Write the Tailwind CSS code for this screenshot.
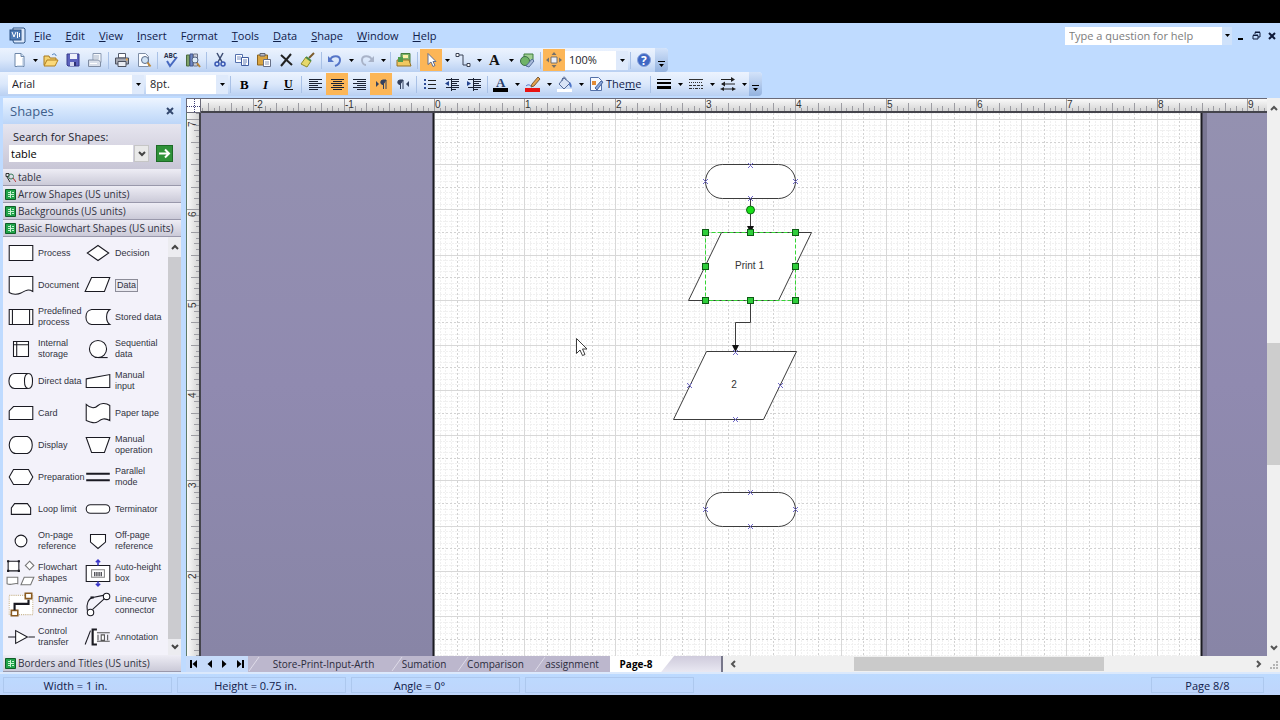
<!DOCTYPE html>
<html lang="en">
<head>
  <meta charset="UTF-8">
  <title>Flowchart - Page-8</title>
  <script src="https://cdn.jsdelivr.net/npm/@tailwindcss/browser@4"></script>
</head>
<body class="h-screen bg-black pt-[23px] pb-[25px] font-['Open_Sans',sans-serif] text-[11px] leading-4 text-[#10204a] overflow-hidden">

  <div class="h-full flex flex-col bg-[#bfdbff]">

    <!-- menu bar -->
    <header class="h-[25px] shrink-0 flex items-center pl-[9px]">
      <svg class="size-[17px] shrink-0" viewBox="0 0 17 17">
        <path d="M4 1h11l1 1v13l-1 1H5l-1-2z" fill="#dce9fb" stroke="#2c5284"/>
        <rect x="1" y="3" width="11" height="10" fill="#4f7cb5" stroke="#2c5284"/>
        <path d="M3 5l2 5 2-5M8.500 5v6M10.500 6v4" fill="none" stroke="#fff"/>
      </svg>
      <nav class="flex gap-[14px] pl-2">
        <a href="#"><u>F</u>ile</a>
        <a href="#"><u>E</u>dit</a>
        <a href="#"><u>V</u>iew</a>
        <a href="#"><u>I</u>nsert</a>
        <a href="#">F<u>o</u>rmat</a>
        <a href="#"><u>T</u>ools</a>
        <a href="#"><u>D</u>ata</a>
        <a href="#"><u>S</u>hape</a>
        <a href="#"><u>W</u>indow</a>
        <a href="#"><u>H</u>elp</a>
      </nav>
      <div class="ml-auto flex items-center">
        <input type="text" aria-label="Help question" placeholder="Type a question for help" class="w-[157px] h-[18px] bg-white px-1 placeholder:text-[#7c7c7c]">
        <button aria-label="Help topics" class="w-[10px] h-[18px] bg-[#cfe2fb] grid place-items-center"><svg width="5" height="3"><path d="M0 0h5L2.500 3z"/></svg></button>
        <button aria-label="Minimize" class="size-4 grid place-items-center"><svg width="9" height="9"><path d="M2 7h5v2H2z"/></svg></button>
        <button aria-label="Restore" class="size-4 grid place-items-center"><svg width="9" height="9" fill="none" stroke="#0c1838"><path d="M3 3V1.500h5V6H6M3 1h5"/><path d="M1 4.500h5V8H1zM1 4h5"/></svg></button>
        <button aria-label="Close" class="size-4 grid place-items-center"><svg width="8" height="8" stroke="#0c1838" stroke-width="2"><path d="M1 1l6 6M7 1L1 7"/></svg></button>
      </div>
    </header>

    <!-- toolbars -->
    <div id="standard" class="h-6 w-fit shrink-0 flex items-center pl-2 rounded-r-sm bg-linear-to-b from-[#ecf3fe] via-[#dbe8fb] to-[#b9d0f2]"></div>
    <div id="formatting" class="h-6 w-fit shrink-0 flex items-center pl-2 rounded-r-sm bg-linear-to-b from-[#ecf3fe] via-[#dbe8fb] to-[#b9d0f2]"></div>

    <main class="flex-1 min-h-0 flex pt-[2px] pl-[3px]">

      <!-- shapes pane -->
      <aside class="w-[178px] shrink-0 flex flex-col bg-[#f3f2fa] text-[#32323f]">
        <div class="h-[26px] shrink-0 flex items-center justify-between px-[7px] bg-linear-to-b from-[#eef5ff] via-[#d3e5fc] to-[#bdd6f8]">
          <h2 class="text-[13px] text-[#3f5f8c]">Shapes</h2>
          <button aria-label="Close pane"><svg width="8" height="8" stroke="#33486e" stroke-width="2"><path d="M1 1l6 6M7 1L1 7"/></svg></button>
        </div>
        <div class="h-[45px] shrink-0 pl-[6px] pt-[5px] bg-linear-to-b from-[#e6e5ef] to-[#c8c6d6]">
          <label for="search" class="block pl-1 text-[#22222c]">Search for Shapes:</label>
          <div class="flex items-center">
            <input id="search" type="text" value="table" class="w-[124px] h-[17px] px-[2px] bg-white text-black">
            <button aria-label="Recent searches" class="w-[15px] h-[17px] ml-px bg-[#e9e9e9] border border-[#c6c6c6] grid place-items-center"><svg width="8" height="6" fill="none" stroke="#444" stroke-width="2"><path d="M1 1l3 3 3-3"/></svg></button>
            <button aria-label="Search" class="size-[17px] ml-[7px] bg-[#2f9139] border border-[#1d6b27] grid place-items-center"><svg width="13" height="11" fill="none" stroke="#fff" stroke-width="2"><path d="M1 5.500h10M7 1.500l4 4-4 4"/></svg></button>
          </div>
        </div>
        <div id="stencils" class="shrink-0"></div>
        <div class="flex-1 min-h-0 flex">
          <div id="shapes" class="flex-1 grid grid-cols-[77px_1fr] auto-rows-[32px] overflow-hidden pl-[2px] font-['Liberation_Sans',Arial,sans-serif] text-[9px] leading-[11px]"></div>
          <div class="w-[13px] shrink-0 flex flex-col items-center justify-between bg-[#ececf0]">
            <button aria-label="Scroll up" class="h-5 grid place-items-center"><svg width="8" height="6" fill="none" stroke="#444" stroke-width="2"><path d="M1 5l3-3 3 3"/></svg></button>
            <div class="w-full flex-1 bg-[#cbcbcf]"></div>
            <button aria-label="Scroll down" class="h-4 grid place-items-center"><svg width="8" height="6" fill="none" stroke="#444" stroke-width="2"><path d="M1 1l3 3 3-3"/></svg></button>
          </div>
        </div>
        <div id="stencilsEnd" class="shrink-0"></div>
      </aside>

      <!-- drawing window -->
      <section class="flex-1 min-w-0 ml-[5px] grid grid-cols-[15px_1fr_13px] grid-rows-[15px_1fr_16px] bg-[#f0f0f0]">
        <div class="bg-white border border-[#6a6a78]">
          <svg class="size-full" viewBox="0 0 13 13" stroke="#3f3f78" stroke-dasharray="1 1"><path d="M0 7.500h13M7.500 0v13"/></svg>
        </div>
        <div class="overflow-hidden bg-linear-to-b from-[#fafafa] to-[#d4d4d4] border-t border-b-2 border-t-[#6a6a78] border-b-[#44444c]">
          <svg id="rulerX" class="block size-full font-['Liberation_Sans',Arial,sans-serif] text-[10px]"></svg>
        </div>
        <div class="row-span-2 flex flex-col items-center justify-between bg-[#f0f0f0]">
          <button aria-label="Scroll up" class="h-5 grid place-items-center"><svg width="8" height="6" fill="none" stroke="#555" stroke-width="2"><path d="M1 5l3-3 3 3"/></svg></button>
          <div class="w-full h-[22%] mt-[50px] bg-[#cdcdcd]"></div>
          <button aria-label="Scroll down" class="h-4 grid place-items-center"><svg width="8" height="6" fill="none" stroke="#555" stroke-width="2"><path d="M1 1l3 3 3-3"/></svg></button>
        </div>

        <div class="overflow-hidden bg-linear-to-r from-[#fafafa] to-[#d4d4d4] border-l border-r-2 border-l-[#5d7a6a] border-r-[#44444c]">
          <svg id="rulerY" class="block size-full font-['Liberation_Sans',Arial,sans-serif] text-[10px]"></svg>
        </div>
        <div class="relative min-w-0 min-h-0 overflow-hidden bg-linear-to-b from-[#9491b0] via-[#908ab0] to-[#8885a6]">
          <svg class="absolute inset-0 size-full font-['Liberation_Sans',Arial,sans-serif] text-[10px]">
            <g transform="translate(233 6)">
              <rect x="768" y="-10" width="5" height="2000" fill="#7a7793"/>
              <rect x="0" y="-10" width="767" height="2000" fill="#fff"/>
              <g id="grid"></g>
              <path d="M-.5-10v2000M767.500-10v2000" stroke="#1c1c22" stroke-width="2"/>

              <g fill="#fff" stroke="#3c3c3c">
                <rect x="271.500" y="45.500" width="90" height="34" rx="17"/>
                <path d="M287.500 113.500h90l-33 68h-90z"/>
                <path d="M272.500 232.500h90l-33 68h-90z"/>
                <rect x="271.500" y="373.500" width="90" height="34" rx="17"/>
                <path d="M316.500 80v30M316.500 181v22.500h-15V230" fill="none"/>
              </g>
              <path d="M313 107h7l-3.500 7zM298 226h7l-3.500 7z" fill="#111"/>

              <text x="315.500" y="150" text-anchor="middle" fill="#333">Print 1</text>
              <text x="300" y="269" text-anchor="middle" fill="#333">2</text>

              <g id="points" fill="none" stroke="#6f68c8"></g>
              <rect x="271.500" y="113.500" width="90" height="68" fill="none" stroke="#35d435" stroke-dasharray="4 2"/>
              <g id="handles" fill="#2fce3b" stroke="#0d5a14"></g>
              <circle cx="316.500" cy="91" r="4" fill="#18e018" stroke="#0d6a14"/>
            </g>
          </svg>
          <svg class="absolute left-[374px] top-[224px]" width="14" height="20" viewBox="0 0 14 20">
            <path d="M1.500 1.500v15l3.500-3.500 2.500 5.500 2.500-1-2.500-5.500h4.500z" fill="#fff" stroke="#3c3c3c"/>
          </svg>
        </div>

        <!-- page tabs and horizontal scroll bar -->
        <div class="col-span-3 flex h-4 min-w-0 text-[10px] text-[#2b2b3c]">
          <div class="w-[62px] shrink-0 flex items-center justify-around bg-[#c6dbfa]">
            <button aria-label="First page"><svg width="8" height="8"><path d="M0 0h2v8H0zM7 0v8L2.500 4z"/></svg></button>
            <button aria-label="Previous page"><svg width="6" height="8"><path d="M5 0v8L.5 4z"/></svg></button>
            <button aria-label="Next page"><svg width="6" height="8"><path d="M1 0v8l4.500-4z"/></svg></button>
            <button aria-label="Last page"><svg width="8" height="8"><path d="M6 0h2v8H6zM1 0v8l4.500-4z"/></svg></button>
          </div>
          <div id="tabs" class="w-[475px] shrink-0 flex bg-linear-to-b from-[#cfcbdc] to-[#e9e8f2] border-r-2 border-[#77778a]"></div>
          <div class="flex-1 flex items-center bg-[#f0f0f0]">
            <button aria-label="Scroll left" class="w-5 grid place-items-center"><svg width="6" height="8" fill="none" stroke="#555" stroke-width="2"><path d="M5 1L2 4l3 3"/></svg></button>
            <div class="flex-1 h-[14px] pl-[20%]"><div class="w-[63%] h-full bg-[#cacaca]"></div></div>
            <button aria-label="Scroll right" class="w-4 grid place-items-center"><svg width="6" height="8" fill="none" stroke="#555" stroke-width="2"><path d="M1 1l3 3-3 3"/></svg></button>
            <svg width="13" height="16" fill="#b4b4b4"><path d="M9 5h2v2H9zM6 8h2v2H6zM9 8h2v2H9zM3 11h2v2H3zM6 11h2v2H6zM9 11h2v2H9z"/></svg>
          </div>
        </div>
      </section>
    </main>

    <!-- status bar -->
    <footer class="h-[23px] shrink-0 flex items-end gap-[5px] pl-[3px] pr-4 pb-[2px] border-t-2 border-[#dbe9fc] bg-linear-to-b from-[#bcdaff] to-[#bfd5fb] text-center">
      <div class="w-[169px] h-4 pr-6 border border-[#adc8ee]">Width = 1 in.</div>
      <div class="w-[169px] h-4 pr-3 border border-[#adc8ee]">Height = 0.75 in.</div>
      <div class="w-[169px] h-4 pr-8 border border-[#adc8ee]">Angle = 0°</div>
      <div class="w-[169px] h-4 border border-[#adc8ee]"></div>
      <div class="w-[113px] h-4 ml-auto border border-[#adc8ee]">Page 8/8</div>
    </footer>
  </div>

  <script>
    const icons = {
      new: '<path d="M4 1.500h6l3 3v10H4z" fill="#fff" stroke="#6d86a8"/><path d="M10 1.500v3h3" fill="#cfe0f4" stroke="#6d86a8"/><path d="M12 6v8H6" stroke="#a9c0dc" fill="none"/>',
      open: '<path d="M1 13V4h5l1 2h6v2" fill="#f3d271" stroke="#a8791e"/><path d="M1 14l3-6h11l-3 6z" fill="#fbd97a" stroke="#b2801f"/><path d="M9 3c2-2 4-1 4 1" stroke="#4478b5" fill="none"/>',
      save: '<path d="M2 2h12v12H3l-1-1z" fill="#5c62bd" stroke="#383c8c"/><path d="M5 2h7v5H5z" fill="#eef1fb"/><path d="M5 10h6v4H5z" fill="#d4d7ee"/><path d="M9 10h2v4H9z" fill="#2f3274"/>',
      stack: '<path d="M6 1.500h8v9H6z" fill="#f5f8fc" stroke="#8b9ab2"/><path d="M7 4h5M7 6h5" stroke="#a8b4c8"/><path d="M1.500 8h10l2 2v4.500h-12z" fill="#d9dfea" stroke="#7f8ca2"/><path d="M3 11.500h7" stroke="#fff"/>',
      print: '<path d="M4.500 1.500h7V6h-7z" fill="#fff" stroke="#555c6c"/><path d="M1.500 6h13v6h-13z" fill="#a5a8b2" stroke="#4c515e"/><path d="M4 9.500h8v5H4z" fill="#e9ecf2" stroke="#4c515e"/><path d="M12 7.500h1.500" stroke="#f1a63a" stroke-width="2"/>',
      preview: '<path d="M2.500 1.500h7l3 3v10h-10z" fill="#fafcff" stroke="#7f8ea6"/><circle cx="9" cy="8" r="3.500" fill="#cfe2f5" stroke="#5c6e8c"/><path d="M11.500 10.500l3 4" stroke="#c18b3c" stroke-width="2"/>',
      spell: '<text x="1" y="6" font-size="6.500" font-weight="bold" fill="#27304a">ABC</text><path d="M4 9l3 5 7-9" fill="none" stroke="#4769c0" stroke-width="2"/>',
      research: '<path d="M1.500 3h3v11h-3z" fill="#7fa26a" stroke="#4a6b3d"/><path d="M5 2h3v12H5z" fill="#6e87c4" stroke="#43578d"/><path d="M8.500 2h4v12h-4z" fill="#c9cdd9" stroke="#6f7687"/><circle cx="10" cy="8" r="3" fill="#dcebf8" stroke="#556583"/><path d="M12 11l3 4" stroke="#b7863c" stroke-width="2"/>',
      cut: '<path d="M5 1l5 9M11 1L6 10" stroke="#3c4c72" stroke-width="1.500"/><circle cx="5" cy="12" r="2" fill="none" stroke="#3957b2" stroke-width="1.500"/><circle cx="11" cy="12" r="2" fill="none" stroke="#3957b2" stroke-width="1.500"/>',
      copy: '<path d="M1.500 2.500h7v8h-7z" fill="#fff" stroke="#5571ad"/><path d="M3 5h4M3 7h4" stroke="#7d93c4"/><path d="M7.500 5.500h7v8h-7z" fill="#fff" stroke="#405da0"/><path d="M9 8h4M9 10h4M9 12h3" stroke="#6681ba"/>',
      paste: '<path d="M1.500 3h10v10h-10z" fill="#d9a440" stroke="#8b6420"/><path d="M4 1.500h5V4H4z" fill="#b9bcc6" stroke="#5e6370"/><path d="M7.500 7.500h7v7h-7z" fill="#fff" stroke="#666f86"/><path d="M9 10h4M9 12h4" stroke="#8e9bb8"/>',
      delete: '<path d="M3 3l11 10M13 2L3 14" stroke="#222" stroke-width="2" fill="none"/>',
      painter: '<path d="M14 1l-5 5" stroke="#7c5c2c" stroke-width="2"/><path d="M6 5l5 4-4 6-6-3z" fill="#e6d86a" stroke="#8d8a2c"/><path d="M6 5l5 4" stroke="#4b8b46" stroke-width="2"/>',
      undo: '<path d="M3 8c2-5 10-5 10 0 0 3-2 5-5 6" fill="none" stroke="#5676c8" stroke-width="2"/><path d="M1 4v6h6z" fill="#5676c8"/>',
      redo: '<path d="M13 8c-2-5-10-5-10 0 0 3 2 5 4 5" fill="none" stroke="#a9b3c8" stroke-width="2"/><path d="M15 4v6H9z" fill="#a9b3c8"/>',
      window: '<path d="M5 1.500h9v9H5z" fill="#7fb46c" stroke="#447d3d"/><path d="M7 3h5v3H7z" fill="#fff0a8"/><path d="M1 8h12l2 6H1z" fill="#f0c860" stroke="#957327"/><path d="M2 5h5v5H2z" fill="#4f9c4a"/>',
      pointer: '<path d="M5 1.500v11l3-2.500 2 4.500 2-1-2-4h3z" fill="#fff" stroke="#5f6f92"/>',
      connector: '<path d="M1 1.500h3v3H1zM12 11.500h3v3h-3z" fill="#fff" stroke="#3b4254"/><path d="M4 3h4v10h4" fill="none" stroke="#3b4254"/>',
      text: '<text x="2" y="13" font-size="15" font-weight="bold" font-family="Liberation Serif" fill="#111">A</text>',
      shape: '<path d="M5 2h9v8H5z" fill="#9fcf93" stroke="#3f7e3f"/><circle cx="6" cy="9" r="4.500" fill="#6fb368" stroke="#3c6e4b"/><path d="M7 14l6-7 2 2-5 6z" fill="#a7b9d9" stroke="#58709c"/>',
      extent: '<path d="M5 5h6v6H5z" fill="#e9eefa" stroke="#76716a"/><path d="M8 0l2.500 3h-5zM8 16l2.500-3h-5zM0 8l3-2.500v5zM16 8l-3-2.500v5z" fill="#76716a"/>',
      help: '<circle cx="8" cy="8" r="6.500" fill="#3f68c4" stroke="#88a3dc"/><text x="5" y="12.500" font-size="12" font-weight="bold" fill="#fff">?</text>',
      bold: '<text x="4" y="12.500" font-size="13" font-weight="bold" font-family="Liberation Serif">B</text>',
      italic: '<text x="5" y="12.500" font-size="13" font-weight="bold" font-style="italic" font-family="Liberation Serif">I</text>',
      underline: '<text x="4" y="11.500" font-size="12" font-weight="bold" font-family="Liberation Serif">U</text><path d="M4 13.500h9" stroke="#111"/>',
      left: '<path d="M2 3.500h13M2 5.500h9M2 7.500h13M2 9.500h9M2 11.500h13M2 13.500h9" stroke="#1b2233"/>',
      center: '<path d="M2 3.500h13M4 5.500h9M2 7.500h13M4 9.500h9M2 11.500h13M4 13.500h9" stroke="#1b2233"/>',
      right: '<path d="M2 3.500h13M6 5.500h9M2 7.500h13M6 9.500h9M2 11.500h13M6 13.500h9" stroke="#1b2233"/>',
      ltr: '<path d="M3 5v6l3-3z" fill="#33415f"/><path d="M13 4h-3a2 2 0 000 4.500zM10.500 4v9M13 4v9" fill="#33415f" stroke="#33415f"/>',
      rtl: '<path d="M14 5v6l-3-3z" fill="#33415f"/><path d="M8 4H5a2 2 0 000 4.500zM5.500 4v9M8 4v9" fill="#33415f" stroke="#33415f"/>',
      bullets: '<path d="M2 3h2v2H2zM2 7h2v2H2zM2 11h2v2H2z" fill="#2c4c98"/><path d="M6 4.500h8M6 8.500h8M6 12.500h8" stroke="#222"/>',
      outdent: '<path d="M2 3.500h13M8 5.500h7M8 7.500h5M8 9.500h7M2 11.500h13M8 13.500h4M7.500 2v13" stroke="#1b2233"/><path d="M5 5v5L1 7.500z" fill="#26458e"/>',
      indent: '<path d="M2 3.500h13M8 5.500h7M8 7.500h5M8 9.500h7M2 11.500h13M8 13.500h4M7.500 2v13" stroke="#1b2233"/><path d="M1 5v5l4-2.500z" fill="#26458e"/>',
      fontColor: '<text x="3" y="11" font-size="13" font-weight="bold" font-family="Liberation Serif" fill="#28406c">A</text><path d="M0 12h15v4H0z" fill="#000"/>',
      lineColor: '<path d="M13 1l2 2-6 7-3 1 1-3z" fill="#e5a14c" stroke="#7b5a36"/><path d="M1 10c2-2 4-1 5 0" stroke="#4a6cc0" fill="none"/><path d="M0 12h15v4H0z" fill="#e81313"/>',
      fill: '<path d="M7 2l6 5-6 6-5-5z" fill="#d9e4f6" stroke="#546a98"/><path d="M5 5c0-5 4-5 4-1" fill="none" stroke="#546a98"/><path d="M13 6c2 2 2 5 1 6l-2-3z" fill="#4b74c8"/><path d="M0 13h15v3H0z" fill="#fff"/>',
      theme: '<path d="M2.500 1.500h8l3 3v10h-11z" fill="#f6f9fe" stroke="#5471a8"/><path d="M4 5h4v4H4z" fill="#e38b35"/><path d="M7 12l6-7 2 1-6 8z" fill="#8aa6dc" stroke="#48669f"/>',
      weight: '<path d="M1 3.500h14" stroke="#000"/><path d="M1 7h14" stroke="#000" stroke-width="2"/><path d="M1 11.500h14" stroke="#000" stroke-width="3"/>',
      dash: '<path d="M1 3.500h14" stroke="#333"/><path d="M1 6.500h14" stroke="#333" stroke-dasharray="1 1"/><path d="M1 9.500h14" stroke="#333" stroke-dasharray="3 1"/><path d="M1 12.500h14" stroke="#333" stroke-dasharray="3 1 1 1"/>',
      ends: '<path d="M1 3.500h13M2 8h13M2 13h12" stroke="#222"/><path d="M11 1l4 2.500-4 2.500zM5 5.500v5L1 8zM4 11v4L0 13zM12 11v4l4-2z" fill="#222"/>',
    };

    const caret = '<svg width="5" height="3"><path d="M0 0h5L2.500 3z"/></svg>';
    const draw = (name) => `<svg class="size-4" viewBox="0 0 16 16">${icons[name]}</svg>`;

    // | separator, v drop-down arrow, * pressed button, select:label:value:size
    function item(code) {
      if (code === '|') return '<div class="w-px h-[17px] mx-[2px] bg-[#a9c1e6]"></div>';
      if (code === 'v') return `<button aria-label="More options" class="w-[10px] h-full grid place-items-center">${caret}</button>`;
      if (code === 'end') return '<button aria-label="Toolbar options" class="w-[13px] h-full flex flex-col items-center justify-end pb-1 bg-linear-to-b from-[#d3e3fa] to-[#93b2df] rounded-r-sm"><svg width="7" height="7"><path d="M0 0h7v1H0zM1 3h5L3.500 6z"/></svg></button>';
      if (code === 'theme') return `<button class="w-[62px] h-full flex items-center gap-px pl-[2px]">${draw('theme')}<span class="pl-px">The<u>m</u>e</span></button>`;
      if (code.startsWith('select')) {
        const [, label, value, size] = code.split(':');
        const width = { font: 'w-[136px]', points: 'w-[82px] ml-[2px]', zoom: 'w-[63px]' }[size];
        return `<div class="${width} h-[19px] relative"><select aria-label="${label}" class="appearance-none size-full pl-[4px] bg-white text-[#1d1d28]"><option>${value}</option></select>
          <span class="absolute right-0 inset-y-0 w-3 grid place-items-center bg-[#dfeafb] pointer-events-none">${caret}</span></div>`;
      }
      if (code[0] === '*') return `<button aria-label="${code.slice(1)}" class="w-[22px] h-[22px] grid place-items-center bg-[#fcb657]">${draw(code.slice(1))}</button>`;
      return `<button aria-label="${code}" class="w-[22px] h-full grid place-items-center">${draw(code)}</button>`;
    }

    document.getElementById('standard').innerHTML = ['new', 'v', 'open', 'save', 'stack', '|', 'print', 'preview', '|', 'spell', 'research', '|',
      'cut', 'copy', 'paste', 'delete', 'painter', '|', 'undo', 'v', 'redo', 'v', '|', 'window', '|', '*pointer', 'v', 'connector', 'v',
      'text', 'v', 'shape', '|', '*extent', 'select:Zoom:100%:zoom', '|', 'help', 'end'].map(item).join('');
    document.getElementById('formatting').innerHTML = ['select:Font:Arial:font', 'select:Font size:8pt.:points', '|', 'bold', 'italic', 'underline', '|',
      'left', '*center', 'right', '*ltr', 'rtl', '|', 'bullets', 'outdent', 'indent', '|', 'fontColor', 'v', 'lineColor', 'v', 'fill', 'v',
      'theme', '|', 'weight', 'v', 'dash', 'v', 'ends', 'v', 'end'].map(item).join('');

    // stencil title bars
    const book = '<svg class="shrink-0" width="11" height="11"><path d="M.5.500h10v10H.5z" fill="#21a34a" stroke="#0f5f28"/><path d="M3 3.500h2M7 3.500h2M3 7.500h2M7 7.500h2M5.500 2v7M3 5.500h6" stroke="#c8f2d2"/></svg>';
    const results = '<svg class="shrink-0" width="11" height="11" fill="none" stroke="#333"><path d="M1 1.500h3v3H1zM2 5l3 5"/><circle cx="6" cy="4.500" r="2.500" stroke="#3b7d5d"/><path d="M8 6l3 4" stroke="#b33"/></svg>';
    const stencil = (name) => `<button class="w-full h-[17px] flex items-center gap-[2px] pl-[2px] text-[10px] text-left whitespace-nowrap border-b border-[#9998ab] bg-linear-to-b from-[#eeedf5] to-[#cbcad8]">${name === 'table' ? results : book}<span>${name}</span></button>`;
    document.getElementById('stencils').innerHTML = ['table', 'Arrow Shapes (US units)', 'Backgrounds (US units)', 'Basic Flowchart Shapes (US units)'].map(stencil).join('');
    document.getElementById('stencilsEnd').innerHTML = stencil('Borders and Titles (US units)');

    // masters, drawn in a 28 x 28 box
    const masters = [
      ['Process', '<path d="M3 7h22v14H3z"/>'],
      ['Decision', '<path d="M14 7l10 7-10 7-10-7z"/>'],
      ['Document', '<path d="M3 6h22v14c-5-3-8 0-11 1.500S6 23 3 21z"/>'],
      ['Data', '<path d="M8 7h17l-5 13H2z"/>'],
      ['Predefined<br>process', '<path d="M3 7h22v14H3zM6 7v14M22 7v14"/>'],
      ['Stored data', '<path d="M8 7h17c-4 3-4 11 0 14H8c-7-1-7-13 0-14z"/>'],
      ['Internal<br>storage', '<path d="M7 7h14v14H7zM10 7v14M7 10h14"/>'],
      ['Sequential<br>data', '<circle cx="14" cy="14" r="8"/><path d="M14 22h9"/>'],
      ['Direct data', '<path d="M8 7h13c5 0 5 14 0 14H8C1 21 1 7 8 7z"/><path d="M21 7c-5 0-5 14 0 14"/>'],
      ['Manual<br>input', '<path d="M3 12l22-4v12H3z"/>'],
      ['Card', '<path d="M7 8h18v12H3v-8z"/>'],
      ['Paper tape', '<path d="M3 6c5 5 9 3 11 1s7-3 11 0v14c-5-3-8-1-11 1s-6 1-11-1z"/>'],
      ['Display', '<path d="M9 6h11c6 3 6 13 0 16H9c-4 0-6-5-6-8s2-8 6-8z"/>'],
      ['Manual<br>operation', '<path d="M3 7h22l-5 14H8z"/>'],
      ['Preparation', '<path d="M7 7h14l4 7-4 7H7l-4-7z"/>'],
      ['Parallel<br>mode', '<path d="M3 11h22M3 17h22" stroke-width="2"/>'],
      ['Loop limit', '<path d="M8 9h12l3 4v6H5v-6z"/>'],
      ['Terminator', '<rect x="3" y="10" width="22" height="8" rx="4"/>'],
      ['On-page<br>reference', '<circle cx="14" cy="14" r="5.500"/>'],
      ['Off-page<br>reference', '<path d="M7 8h14v7l-7 6-7-6z"/>'],
      ['Flowchart<br>shapes', '<path d="M2 3h10v9H2z"/><path d="M22 3l4 4-4 4-4-4zM1 18h10v6c-4-1-6 2-10 0zM17 18h9l-3 7h-9z" stroke="#777"/><path d="M1 3h2M11 3h2M1 12h2M11 12h2" stroke-width="2"/>'],
      ['Auto-height<br>box', '<path d="M3 7h22v15H3z"/><path d="M8 11h12v7H8z" stroke="#888"/><path d="M11 13v4M13 13v4M15 13v4M17 13v4"/><path d="M14 7V2M12 4l2-2 2 2M14 22v4M12 24l2 2 2-2" fill="none" stroke="#3a37c8" stroke-width="1.500"/>'],
      ['Dynamic<br>connector', '<path d="M3 5h22v18H3z" stroke="#c9b68f" stroke-dasharray="1 1"/><path d="M18 3h6v5h-6zM5 19h6v5H5z" stroke="#8a5a20" stroke-width="1.500"/><path d="M21 9v4H8v6" fill="none" stroke-width="2"/>'],
      ['Line-curve<br>connector', '<circle cx="22" cy="6" r="3"/><circle cx="7" cy="21" r="3"/><path d="M20 8L9 18M4 19c-1-6 1-11 5-12l10-2" fill="none"/><path d="M7 7h3" stroke-width="2"/>'],
      ['Control<br>transfer', '<path d="M2 14h7M21 14h6M9 8v12l11-6z"/>'],
      ['Annotation', '<path d="M2 21L7 8"/><path d="M13 7H9v14h4" stroke-width="2"/><path d="M13 10h12M13 18h12M14 12v5M17 12v5h3v-5zM23 12v5" stroke="#555"/>'],
    ];
    document.getElementById('shapes').innerHTML = masters.map(([label, art]) => `
      <button class="flex items-center gap-[2px] pl-px text-left whitespace-nowrap">
        <svg class="size-[30px] shrink-0" viewBox="0 0 28 28" fill="#fff" stroke="#1a1a22">${art}</svg>
        <span class="${label === 'Data' ? 'border border-[#8c8c98] bg-[#e9e9f0] px-px' : ''}">${label}</span>
      </button>`).join('');

    // page tabs
    document.getElementById('tabs').innerHTML = [
      ['Store-Print-Input-Arth', 'w-[143px] pl-2'], ['Sumation', 'w-[66px]'], ['Comparison', 'w-[77px]'], ['assignment', 'w-[76px]'],
    ].map(([name, size]) => `<button class="${size} relative bg-[#bcb7cd]">
        <svg class="absolute left-0 top-0" width="12" height="16"><path d="M1 15L11 1" stroke="#dedbe8"/></svg>${name}</button>`).join('') +
      '<button class="w-[64px] pr-3 bg-white font-bold text-black [clip-path:polygon(0_0,100%_0,80%_100%,0_100%)]">Page-8</button>';

    // rulers and grid, 16 steps to the inch
    const INCH = 90.35;
    let topTicks = '', sideTicks = '', faint = '', dotted = '', solid = '';
    for (let i = -48; i < 480; i++) {
      const at = Math.round(i * INCH / 16);
      const size = i % 16 === 0 ? 14 : i % 4 === 0 ? 8 : i % 2 === 0 ? 5 : 3;
      topTicks += `M${at + 233.5} 12v-${size}`;
      sideTicks += `M12 ${at + 6.5}h-${size}`;
      const line = `M${at + .5}-10v2000`;
      const row = `M0 ${at + .5}h766`;
      const part = (i >= 0 && at < 767 ? line : '') + row;
      if (i % 8 === 0) solid += part;
      else if (i % 4 === 0) dotted += part;
      else faint += part;
    }
    let topText = '', sideText = '';
    for (let n = -2; n <= 9; n++) topText += `<text x="${Math.round(n * INCH) + 234}" y="9">${n}</text>`;
    for (let n = 7; n >= 2; n--) {
      const y = Math.round((7 - n) * INCH) + 8;
      sideText += `<text transform="translate(9 ${y + 6}) rotate(-90)">${n}</text>`;
    }
    document.getElementById('rulerX').innerHTML = `<path d="${topTicks}" stroke="#9c9ca2"/><g fill="#333">${topText}</g>`;
    document.getElementById('rulerY').innerHTML = `<path d="${sideTicks}" stroke="#9c9ca2"/><g fill="#333">${sideText}</g>`;
    document.getElementById('grid').innerHTML = `
      <path d="${faint}" stroke="#f0f0f0" stroke-dasharray="2 1"/>
      <path d="${dotted}" stroke="#d2d2d2" stroke-dasharray="2 2"/>
      <path d="${solid}" stroke="#d8d8d8"/>`;

    const points = [[316, 46], [271, 62], [361, 62], [316, 79], [301, 233], [255, 266], [346, 266], [301, 300], [316, 373], [271, 390], [361, 390], [316, 407]];
    document.getElementById('points').innerHTML = points.map(([x, y]) => `<path d="M${x - 2} ${y - 2}l5 5M${x + 3} ${y - 2}l-5 5"/>`).join('');
    const handles = [[271, 113], [316, 113], [361, 113], [271, 147], [361, 147], [271, 181], [316, 181], [361, 181]];
    document.getElementById('handles').innerHTML = handles.map(([x, y]) => `<rect x="${x - 2.5}" y="${y - 2.5}" width="6" height="6"/>`).join('');
  </script>
</body>
</html>
